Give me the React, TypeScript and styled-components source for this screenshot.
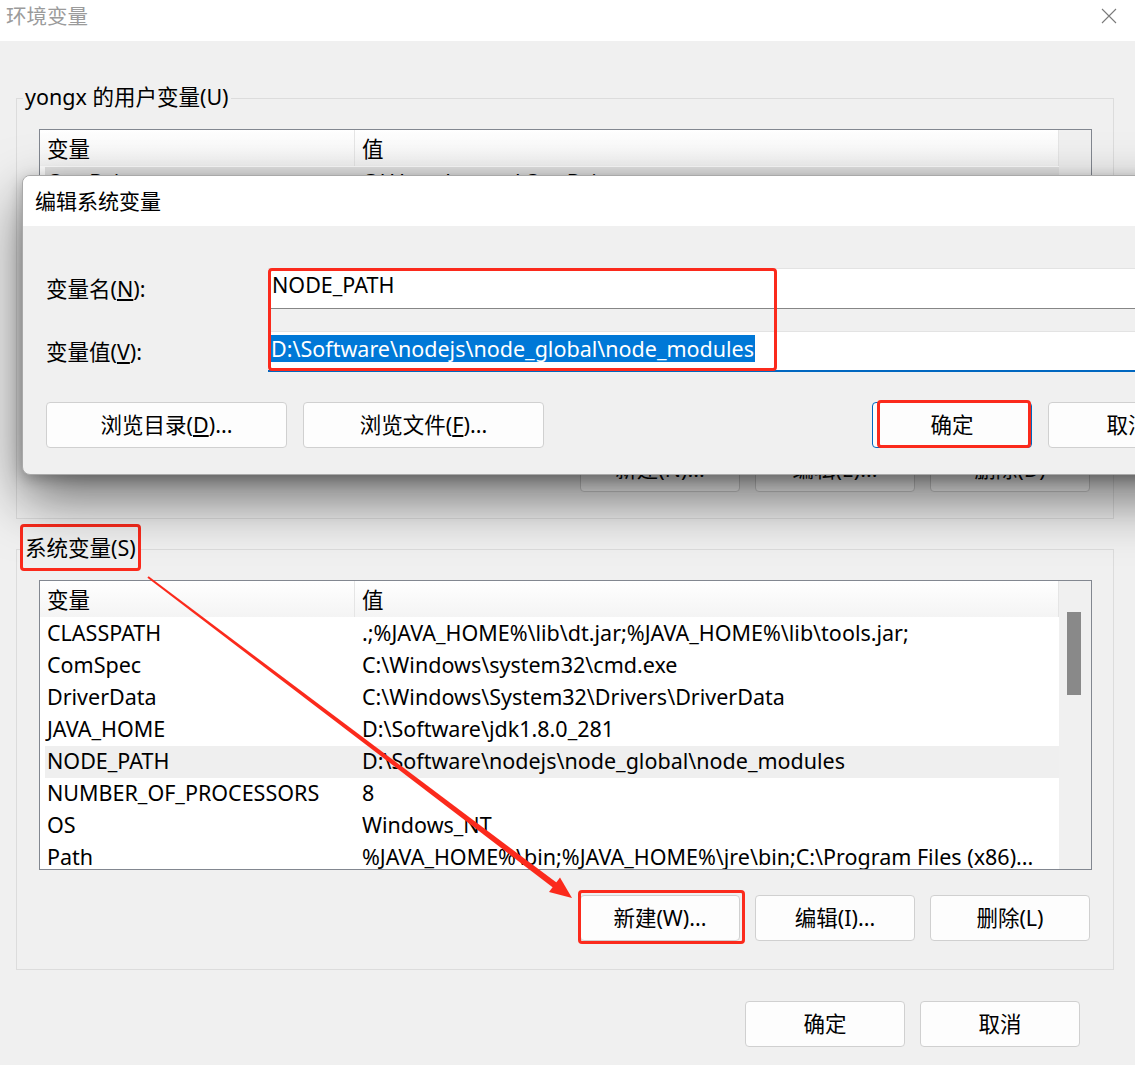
import React from 'react'
import styled, { createGlobalStyle, css } from 'styled-components'

const RED = '#fb2a1c'

const GlobalStyle = createGlobalStyle`
  html, body {
    margin: 0;
    padding: 0;
  }
  body {
    width: 1135px;
    height: 1065px;
    overflow: hidden;
    background: #f0f0f0;
    font-family: "Noto Sans", "Noto Sans CJK SC", sans-serif;
    font-size: 21.5px;
    color: #000;
  }
`

const Window = styled.div`
  position: relative;
  width: 1135px;
  height: 1065px;
  overflow: hidden;
  background: #f0f0f0;
`

const TitleBar = styled.div`
  height: 41px;
  background: #fff;
  display: flex;
  align-items: flex-start;
  justify-content: space-between;
  padding: 2px 18px 0 6px;
  box-sizing: border-box;
`

const TitleText = styled.div`
  line-height: 28px;
  font-size: 20.5px;
  color: #9b9b9b;
`

const CloseIcon = styled.svg`
  margin-top: 6px;
`

const Content = styled.div`
  padding: 43px 21px 0 16px;
`

const Group = styled.fieldset<{ $gap?: number }>`
  margin: ${({ $gap }) => $gap ?? 0}px 0 0 0;
  padding: 0 0 0 6px;
  border: 1px solid #dcdcdc;
  min-width: 0;
`

const Legend = styled.legend<{ $marked?: boolean }>`
  padding: 0 2px 2px;
  line-height: 26px;
  position: relative;
  ${({ $marked }) =>
    $marked &&
    css`
      &::after {
        content: '';
        position: absolute;
        left: -3px;
        right: -3px;
        top: -11px;
        bottom: -8px;
        border: 3px solid ${RED};
        border-radius: 4px;
      }
    `}
`

const GroupBody = styled.div<{ $bottom: number }>`
  padding: 17px 21px ${({ $bottom }) => $bottom}px 16px;
  display: flex;
  flex-direction: column;
  gap: 25px;
`

const ListView = styled.div<{ $height: number }>`
  height: ${({ $height }) => $height}px;
  border: 1px solid #828790;
  background: #fff;
  display: flex;
  box-sizing: border-box;
`

const ListMain = styled.div`
  flex: 1;
  min-width: 0;
  display: flex;
  flex-direction: column;
`

const Header = styled.div`
  height: 36px;
  flex-shrink: 0;
  display: flex;
  background: linear-gradient(#ffffff, #f4f4f4);
`

const HeaderCell = styled.div<{ $width?: number }>`
  ${({ $width }) => ($width ? `width: ${$width}px;` : 'flex: 1;')}
  box-sizing: border-box;
  padding: 1px 0 0 7px;
  line-height: 36px;
  border-right: 1px solid #e5e5e5;
`

const Rows = styled.div`
  flex: 1;
  overflow: hidden;
  padding: 1px 0 0 5px;
`

const Row = styled.div<{ $selected?: boolean; $tone?: string }>`
  height: 32px;
  box-sizing: border-box;
  padding-bottom: 3px;
  display: flex;
  align-items: center;
  white-space: nowrap;
  background: ${({ $selected, $tone }) => ($selected ? $tone ?? '#efefef' : 'transparent')};
`

const NameCell = styled.div`
  width: 317px;
  flex-shrink: 0;
  padding-left: 2px;
  box-sizing: border-box;
  overflow: hidden;
`

const ValueCell = styled.div`
  flex: 1;
  overflow: hidden;
`

const ScrollTrack = styled.div`
  width: 32px;
  flex-shrink: 0;
  background: #f0f0f0;
`

const ScrollThumb = styled.div`
  margin: 31px 0 0 8px;
  width: 14px;
  height: 83px;
  background: #898989;
`

const ButtonRow = styled.div<{ $right?: number }>`
  display: flex;
  justify-content: flex-end;
  gap: 15px;
  margin-right: ${({ $right }) => $right ?? 0}px;
`

const Button = styled.button<{ $width?: number; $focused?: boolean }>`
  position: relative;
  width: ${({ $width }) => $width ?? 160}px;
  height: 46px;
  padding: 0 0 3px;
  border: 1px solid ${({ $focused }) => ($focused ? '#0067c0' : '#d0d0d0')};
  border-radius: 4px;
  background: #fdfdfd;
  font: inherit;
  color: #000;
  white-space: nowrap;
`

const Mark = styled.span<{ $l: number; $t: number; $r: number; $b: number }>`
  position: absolute;
  left: ${({ $l }) => $l}px;
  top: ${({ $t }) => $t}px;
  right: ${({ $r }) => $r}px;
  bottom: ${({ $b }) => $b}px;
  border: 3px solid ${RED};
  border-radius: 4px;
  pointer-events: none;
`

const Footer = styled.div`
  margin-top: 31px;
  margin-right: 34px;
  display: flex;
  justify-content: flex-end;
  gap: 15px;
`

/* the edit dialog floats above the main window */
const Dialog = styled.div`
  position: absolute;
  left: 22px;
  top: 175px;
  width: 1211px;
  height: 300px;
  box-sizing: border-box;
  border: 1px solid #a9a9a9;
  border-radius: 8px;
  overflow: hidden;
  background: #f0f0f0;
  box-shadow: 0 24px 56px rgba(0, 0, 0, 0.55), 0 4px 14px rgba(0, 0, 0, 0.25);
  display: flex;
  flex-direction: column;
`

const DialogTitle = styled.div`
  height: 50px;
  box-sizing: border-box;
  background: #fff;
  padding: 0 0 3px 12px;
  display: flex;
  align-items: center;
  font-size: 21px;
  flex-shrink: 0;
`

const DialogBody = styled.div`
  flex: 1;
  padding: 42px 24px 0 23px;
  display: flex;
  flex-direction: column;
`

const Fields = styled.div`
  display: grid;
  grid-template-columns: 222px 1fr;
`

const Labels = styled.div`
  display: flex;
  flex-direction: column;
  gap: 22px;
`

const Label = styled.div`
  height: 41px;
  display: flex;
  align-items: center;
  padding-top: 1px;
  box-sizing: border-box;
  line-height: 28px;
`

const Inputs = styled.div`
  position: relative;
  display: flex;
  flex-direction: column;
  gap: 22px;

  &::after {
    content: '';
    position: absolute;
    left: 0;
    top: 0;
    width: 509px;
    height: 103px;
    box-sizing: border-box;
    border: 3px solid ${RED};
    border-radius: 4px;
  }
`

const TextBox = styled.div<{ $focused?: boolean }>`
  height: 41px;
  box-sizing: border-box;
  background: #fff;
  border-top: 1px solid #e3e3e3;
  border-bottom: ${({ $focused }) => ($focused ? '2px solid #0067c0' : '1px solid #868686')};
  padding: 2px 0 0 4px;
  line-height: 28px;
  white-space: nowrap;
`

const Selected = styled.span`
  background: #0078d7;
  color: #fff;
  display: inline-block;
  line-height: 27px;
  padding: 0 1px 0 0;
  margin: 1px 0 0 -1px;
`

const DialogButtons = styled.div`
  margin-top: 30px;
  display: flex;
  justify-content: space-between;
`

const ButtonGroup = styled.div`
  display: flex;
  gap: 16px;
`

const Overlay = styled.svg`
  position: absolute;
  left: 0;
  top: 0;
  pointer-events: none;
`

type Variable = [string, string]

const userVars: Variable[] = [
  ['OneDrive', 'C:\\Users\\yongx\\OneDrive'],
  ['Path', 'C:\\Users\\yongx\\AppData\\Local\\Microsoft\\WindowsApps;'],
  ['TEMP', 'C:\\Users\\yongx\\AppData\\Local\\Temp'],
  ['TMP', 'C:\\Users\\yongx\\AppData\\Local\\Temp'],
]

const systemVars: Variable[] = [
  ['CLASSPATH', '.;%JAVA_HOME%\\lib\\dt.jar;%JAVA_HOME%\\lib\\tools.jar;'],
  ['ComSpec', 'C:\\Windows\\system32\\cmd.exe'],
  ['DriverData', 'C:\\Windows\\System32\\Drivers\\DriverData'],
  ['JAVA_HOME', 'D:\\Software\\jdk1.8.0_281'],
  ['NODE_PATH', 'D:\\Software\\nodejs\\node_global\\node_modules'],
  ['NUMBER_OF_PROCESSORS', '8'],
  ['OS', 'Windows_NT'],
  ['Path', '%JAVA_HOME%\\bin;%JAVA_HOME%\\jre\\bin;C:\\Program Files (x86)...'],
]

type VariableListProps = {
  rows: Variable[]
  height: number
  selected: number
  tone?: string
  thumb?: boolean
}

const VariableList = ({ rows, height, selected, tone, thumb }: VariableListProps) => (
  <ListView $height={height}>
    <ListMain>
      <Header>
        <HeaderCell $width={315}>变量</HeaderCell>
        <HeaderCell>值</HeaderCell>
      </Header>
      <Rows>
        {rows.map(([name, value], i) => (
          <Row key={name} $selected={i === selected} $tone={tone}>
            <NameCell>{name}</NameCell>
            <ValueCell>{value}</ValueCell>
          </Row>
        ))}
      </Rows>
    </ListMain>
    <ScrollTrack>{thumb && <ScrollThumb />}</ScrollTrack>
  </ListView>
)

export default function App() {
  return (
    <Window>
      <GlobalStyle />
      <TitleBar>
        <TitleText>环境变量</TitleText>
        <CloseIcon width="16" height="16" viewBox="0 0 16 16">
          <path d="M1 1 L15 15 M15 1 L1 15" stroke="#7a7a7a" strokeWidth="1.1" fill="none" />
        </CloseIcon>
      </TitleBar>

      <Content>
        <Group>
          <Legend>yongx 的用户变量(U)</Legend>
          <GroupBody $bottom={26}>
            <VariableList rows={userVars} height={292} selected={0} tone="#e4e4e4" />
            <ButtonRow $right={2}>
              <Button>新建(N)...</Button>
              <Button>编辑(E)...</Button>
              <Button>删除(D)</Button>
            </ButtonRow>
          </GroupBody>
        </Group>

        <Group $gap={16}>
          <Legend $marked>系统变量(S)</Legend>
          <GroupBody $bottom={28}>
            <VariableList rows={systemVars} height={290} selected={4} thumb />
            <ButtonRow $right={2}>
              <Button>
                新建(W)...
                <Mark $l={-3} $t={-6} $r={-6} $b={-4} />
              </Button>
              <Button>编辑(I)...</Button>
              <Button>删除(L)</Button>
            </ButtonRow>
          </GroupBody>
        </Group>

        <Footer>
          <Button>确定</Button>
          <Button>取消</Button>
        </Footer>
      </Content>

      <Dialog>
        <DialogTitle>编辑系统变量</DialogTitle>
        <DialogBody>
          <Fields>
            <Labels>
              <Label>
                变量名(<u>N</u>):
              </Label>
              <Label>
                变量值(<u>V</u>):
              </Label>
            </Labels>
            <Inputs>
              <TextBox>NODE_PATH</TextBox>
              <TextBox $focused>
                <Selected>D:\Software\nodejs\node_global\node_modules</Selected>
              </TextBox>
            </Inputs>
          </Fields>
          <DialogButtons>
            <ButtonGroup>
              <Button $width={241}>
                浏览目录(<u>D</u>)...
              </Button>
              <Button $width={241}>
                浏览文件(<u>F</u>)...
              </Button>
            </ButtonGroup>
            <ButtonGroup>
              <Button $focused>
                确定
                <Mark $l={4} $t={-3} $r={0} $b={-1} />
              </Button>
              <Button>取消</Button>
            </ButtonGroup>
          </DialogButtons>
        </DialogBody>
      </Dialog>

      <Overlay width="1135" height="1065" viewBox="0 0 1135 1065">
        <polygon
          points="148.6,576.2 147.4,577.8 554.2,888.4 557.8,883.6"
          fill={RED}
        />
        <polygon points="572,898 549,892 560,877.5" fill={RED} />
      </Overlay>
    </Window>
  )
}
